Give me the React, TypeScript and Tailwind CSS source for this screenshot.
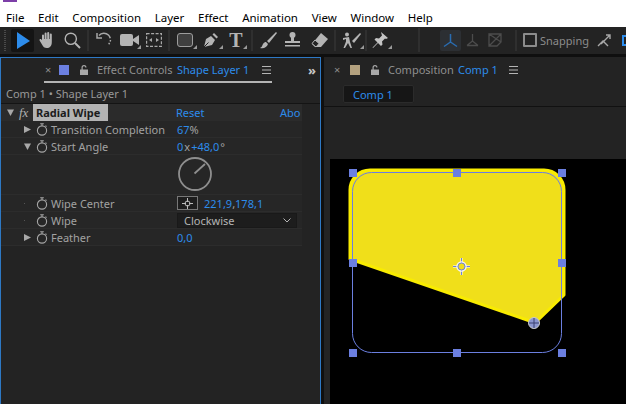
import type { ReactNode } from "react";

const menus = ["File", "Edit", "Composition", "Layer", "Effect", "Animation", "View", "Window", "Help"];

function Tool({ w, children, corner }: { w: number; children: ReactNode; corner?: boolean }) {
  return (
    <div className="relative flex h-full shrink-0 items-center justify-center" style={{ width: w }}>
      {children}
      {corner && <span className="absolute bottom-[4px] right-[1px] h-0 w-0 border-b-[4px] border-l-[4px] border-b-[#9a9a9a] border-l-transparent" />}
    </div>
  );
}

function Sep({ gap = 0 }: { gap?: number }) {
  return <div className="h-[21px] w-[2px] shrink-0 bg-[#2f2f2f]" style={{ marginLeft: gap, marginRight: gap }} />;
}

function Twirl({ open }: { open?: boolean }) {
  return open ? (
    <svg width="9" height="9" viewBox="0 0 9 9"><path d="M1 1.500h7L4.500 8z" fill="#a8a8a8" /></svg>
  ) : (
    <svg width="9" height="9" viewBox="0 0 9 9"><path d="M1 1v7l7-3.500z" fill="#a8a8a8" /></svg>
  );
}

function Watch() {
  return (
    <svg width="12" height="13" viewBox="0 0 12 13" fill="none" stroke="#a6a6a6" strokeWidth="1.1">
      <circle cx="6" cy="7.5" r="4.6" />
      <path d="M4.2.8h3.6M6 .8v2M9.5 2.600l1 1" />
    </svg>
  );
}

function Row({ twirl, label, children }: { twirl?: "open" | "closed"; label: string; children: ReactNode }) {
  return (
    <div className="flex h-[17px] items-center border-b border-[#2c2c2c]">
      <div className="flex w-[35px] shrink-0 justify-end pr-[4px]">
        {twirl ? <Twirl open={twirl === "open"} /> : <span className="mr-[7px] h-[1px] w-[1px] bg-[#555]" />}
      </div>
      <div className="flex w-[15px] shrink-0"><Watch /></div>
      <div className="w-[126px] shrink-0 text-[#a2a2a2]">{label}</div>
      <div className="flex min-w-0 flex-1 items-center text-[#2d8ceb]">{children}</div>
    </div>
  );
}

export default function App() {
  return (
    <div className="flex h-[404px] w-[626px] flex-col overflow-hidden bg-[#0f0f0f] font-['Noto_Sans',sans-serif] text-[11px] leading-none">
      {/* windows menu */}
      <div className="relative h-[27px] shrink-0 bg-white pl-[6px] pt-[12px] text-[11.5px] text-black">
        <div className="absolute left-[3px] top-0 h-[2px] w-[14px] bg-[#7d3fa8]" />
        <div className="flex gap-[13.7px]">
          {menus.map((m) => (
            <span key={m}>{m}</span>
          ))}
        </div>
      </div>

      {/* toolbar */}
      <div className="flex h-[27px] shrink-0 items-center bg-[#232323] pl-[4px] pb-[1px]">
        <div className="mr-[5px] h-[21px] w-[3px] border-x border-dotted border-[#4a4a4a]" />
        <Tool w={23}>
          <div className="flex h-[23px] w-[23px] items-center justify-center rounded-[2px] bg-[#141414]">
            <svg width="14" height="17" viewBox="0 0 14 17"><path d="M1 0v17L14 9z" fill="#2d8ceb" /></svg>
          </div>
        </Tool>
        <Tool w={26}>
          <svg width="17" height="18" viewBox="0 0 17 18" fill="#b4b4b4"><path d="M3 9V4.500a1 1 0 0 1 2 0V8h.6V2.500a1 1 0 0 1 2 0V8h.6V2a1 1 0 0 1 2 0v6h.6V3.600a1 1 0 0 1 2 0V11c0 4-2 6-5 6-2.500 0-3.500-1-4.500-3L.6 9.500c-.6-1.200 1-2 1.700-1z" /></svg>
        </Tool>
        <Tool w={24}>
          <svg width="17" height="17" viewBox="0 0 17 17" fill="none" stroke="#b4b4b4" strokeWidth="1.4"><circle cx="6.800" cy="6.800" r="5.600" /><path d="M11 11l5 5" strokeWidth="2" /></svg>
        </Tool>
        <Sep gap={3} />
        <Tool w={24}>
          <svg width="17" height="16" viewBox="0 0 17 16" fill="none" stroke="#a8a8a8" strokeWidth="1.5"><path d="M3 3.500A6.500 6.500 0 1 1 3 12" strokeDasharray="14 1.500 1.500 1.500 1.500" /><path d="M1 1v5h5" strokeWidth="1.500" /></svg>
        </Tool>
        <Tool w={26} corner>
          <svg width="19" height="12" viewBox="0 0 19 12" fill="#b4b4b4"><rect x="0" y="0" width="13" height="12" rx="2" /><path d="M13 5l6-4v10l-6-4z" /></svg>
        </Tool>
        <Tool w={24}>
          <svg width="16" height="14" viewBox="0 0 16 14" fill="none" stroke="#a8a8a8" strokeWidth="1.200"><rect x="0.600" y="0.600" width="14.800" height="12.800" strokeDasharray="3 1.500" /><path d="M3 7l3-2v4zM13 7l-3-2v4z" fill="#a8a8a8" stroke="none" /></svg>
        </Tool>
        <Sep gap={2} />
        <Tool w={26} corner>
          <div className="h-[14px] w-[16px] rounded-[3px] border border-[#9c9c9c] bg-[#3f3f3f]" />
        </Tool>
        <Tool w={26} corner>
          <svg width="16" height="16" viewBox="0 0 16 16" fill="#b4b4b4"><path d="M1 15l2-8 5-3 4 4-3 5zM9.500 2.500l1.500-1.500 4 4-1.500 1.500z" /><path d="M1 15l4.500-4.500" stroke="#232323" strokeWidth="1" /></svg>
        </Tool>
        <Tool w={24} corner>
          <span className="font-['Liberation_Serif',serif] text-[20px] font-bold text-[#b4b4b4]">T</span>
        </Tool>
        <Sep gap={3} />
        <Tool w={24}>
          <svg width="17" height="17" viewBox="0 0 17 17" fill="#b4b4b4"><path d="M16 0l1 1-8 10-2-2zM6 10l2 2c-1 3-4 5-8 4 2-1 2-2 3-4 1-1.500 2-2 3-2z" /></svg>
        </Tool>
        <Tool w={24}>
          <svg width="17" height="16" viewBox="0 0 17 16" fill="#b4b4b4"><circle cx="8.500" cy="3" r="3" /><path d="M7 5h3v4h6v2H1V9h6zM1 13h15v1.500H1z" /></svg>
        </Tool>
        <Tool w={30}>
          <svg width="17" height="15" viewBox="0 0 17 15"><path d="M10 0l7 6-7 8-6 0-3-3z" fill="#b4b4b4" /><path d="M1 10.500l4 3.500 3-3.500-4-3.500z" fill="#232323" stroke="#b4b4b4" strokeWidth="1" /></svg>
        </Tool>
        <Sep />
        <Tool w={29} corner>
          <svg width="20" height="17" viewBox="0 0 20 17" fill="#b4b4b4"><circle cx="6" cy="2.500" r="2" /><path d="M2 6l6-1 1 5 2 6H9.500L7 11l-3 5H2.500L5 9.500V7L2 8zM19 1l1 1-7 9-2-2z" /></svg>
        </Tool>
        <Sep />
        <Tool w={26} corner>
          <svg width="16" height="16" viewBox="0 0 16 16" fill="#c4c4c4"><path d="M9 0l7 6-2 1-1-.5-3 3 .5 3-1.500 1.500-3-3L1 16l-.5-.5 5-5-3-3L4 6l3 .5 3-3L9.500 2z" /></svg>
        </Tool>
        <div className="ml-[25px] h-[24px] w-[2px] shrink-0 bg-[#2f2f2f]" />
        <div className="ml-[20px] flex h-[21px] w-[21px] shrink-0 items-center justify-center rounded-[2px] bg-[#2c2f33]">
          <svg width="15" height="15" viewBox="0 0 15 15" fill="none" stroke="#2a6cb0" strokeWidth="1.500"><path d="M7.500 1v8M7.500 9L1 13.500M7.500 9l6.500 4.500" /></svg>
        </div>
        <Tool w={22}>
          <svg width="15" height="15" viewBox="0 0 15 15" fill="none" stroke="#4c4c4c" strokeWidth="1.300"><path d="M7.500 1v7M7.500 8L2 12.500M7.500 8l5.500 4.500M2 12.500h11" /></svg>
        </Tool>
        <Tool w={24}>
          <svg width="14" height="14" viewBox="0 0 14 14" fill="none" stroke="#4c4c4c" strokeWidth="1.300"><path d="M1 1h12v8L9 13H1zM1 1l12 8M13 1L1 13" /></svg>
        </Tool>
        <div className="ml-[8px] h-[21px] w-[2px] shrink-0 bg-[#2f2f2f]" />
        <div className="ml-[6px] h-[14px] w-[14px] shrink-0 rounded-[1px] border-2 border-[#8c8c8c]" />
        <span className="ml-[3px] shrink-0 text-[#8c8c8c]">Snapping</span>
        <Tool w={30}>
          <svg width="14" height="13" viewBox="0 0 14 13" fill="none" stroke="#a8a8a8" strokeWidth="1.400"><path d="M1 12l5-5 5 5M4 10l9-9M9 1h4v4" /></svg>
        </Tool>
        <div className="ml-[3px] h-[11px] w-[6px] shrink-0 border-y-2 border-l-2 border-[#2d8ceb]" />
      </div>

      <div className="flex min-h-0 flex-1 pt-[3px]">
        {/* effect controls panel */}
        <div className="flex w-[321px] shrink-0 flex-col border border-b-0 border-[#2d78c4] bg-[#232323]">
          <div className="flex h-[25px] shrink-0 items-center pl-[43px]">
            <div className="flex h-full items-center border-b-2 border-[#b4b4b4] pr-[1px]">
              <span className="ml-[1px] w-[14px] text-[11px] text-[#8c8c8c]">×</span>
              <span className="h-[10px] w-[10px] bg-[#6b7fe0]" />
              <svg className="ml-[11px] mr-[9px]" width="8" height="10" viewBox="0 0 8 10" fill="#a8a8a8"><path d="M0 4.500h8V10H0zM1.500 4.500V2.500a2.500 2.500 0 0 1 5 0H5.300a1.300 1.300 0 0 0-2.600 0v2z" /></svg>
              <span className="w-[80px] whitespace-nowrap text-[#8f8f8f]">Effect Controls</span>
              <span className="w-[85px] whitespace-nowrap text-[#2d8ceb]">Shape Layer 1</span>
              <Burger />
            </div>
            <span className="ml-auto mr-[4px] text-[13px] font-bold text-[#c8c8c8]">»</span>
          </div>
          <div className="flex h-[21px] shrink-0 items-center border-b border-[#141414] pl-[5px] text-[#999]">Comp 1 • Shape Layer 1</div>
          <div className="w-[301px] overflow-hidden bg-[#262626]">
            <div className="flex h-[17px] items-center bg-[#2b2b2b]">
              <div className="flex w-[18px] shrink-0 justify-end pr-[4px]"><Twirl open /></div>
              <span className="w-[14px] shrink-0 font-['Liberation_Serif',serif] text-[13px] italic text-[#b0b0b0]">fx</span>
              <span className="flex h-full w-[75px] shrink-0 items-center bg-[#b3b3b3] pl-[3px] font-bold text-[#1c1c1c]">Radial Wipe</span>
              <span className="ml-[68px] w-[104px] shrink-0 text-[#2d8ceb]">Reset</span>
              <span className="text-[#2d8ceb]">Abo</span>
            </div>
            <Row twirl="closed" label="Transition Completion">67<span className="text-[#a2a2a2]">%</span></Row>
            <Row twirl="open" label="Start Angle">
              <span>0</span><span className="mx-[1px] text-[#a2a2a2]">x</span><span>+48,0</span><span className="ml-[1px] text-[#a2a2a2]">°</span>
            </Row>
            <div className="flex h-[40px] items-center border-b border-[#2c2c2c] pb-[1px] pl-[176px]">
              <svg width="36" height="36" viewBox="0 0 36 36" fill="none" stroke="#8e8e8e" strokeWidth="1.800">
                <circle cx="18" cy="18" r="16" />
                <path d="M17.500 17.500L28 8" />
              </svg>
            </div>
            <Row label="Wipe Center">
              <div className="mr-[6px] flex h-[14px] w-[21px] items-center justify-center border border-[#777] bg-[#1d1d1d]">
                <svg width="11" height="11" viewBox="0 0 11 11" fill="none" stroke="#bcbcbc"><circle cx="5.500" cy="5.500" r="2.500" /><path d="M5.500 0v4M5.500 7v4M0 5.500h4M7 5.500h4" /></svg>
              </div>
              221,9<span className="text-[#a2a2a2]">,</span>178,1
            </Row>
            <Row label="Wipe">
              <div className="mr-[4px] flex h-[15px] w-[120px] items-center justify-between border border-[#191919] bg-[#1d1d1d] pl-[6px] pr-[5px] text-[#b4b4b4]">
                Clockwise
                <svg width="8" height="5" viewBox="0 0 8 5" fill="none" stroke="#b4b4b4"><path d="M.5.500L4 4 7.500.500" /></svg>
              </div>
            </Row>
            <Row twirl="closed" label="Feather">0,0</Row>
          </div>
        </div>

        {/* composition panel */}
        <div className="ml-[3px] flex min-w-0 flex-1 flex-col bg-[#232323]">
          <div className="flex h-[25px] shrink-0 items-center pl-[10px]">
            <span className="w-[16px] text-[#8c8c8c]">×</span>
            <span className="h-[10px] w-[10px] bg-[#b3a17f]" />
            <svg className="ml-[11px] mr-[9px]" width="8" height="10" viewBox="0 0 8 10" fill="#a8a8a8"><path d="M0 4.500h8V10H0zM1.500 4.500V2.500a2.500 2.500 0 0 1 5 0H5.300a1.300 1.300 0 0 0-2.600 0v2z" /></svg>
            <span className="w-[70px] whitespace-nowrap text-[#8f8f8f]">Composition</span>
            <span className="w-[51px] whitespace-nowrap text-[#2d8ceb]">Comp 1</span>
            <Burger />
          </div>
          <div className="flex h-[25px] shrink-0 items-center border-b border-[#111] pl-[19px]">
            <div className="flex h-[18px] w-[71px] items-center rounded-[2px] border border-[#2b2b2b] bg-[#161616] pl-[9px] text-[#2d8ceb]">Comp 1</div>
          </div>
          <div className="h-[52px] shrink-0" />
          <div className="ml-[6px] min-h-0 flex-1 bg-black">
            <Viewer />
          </div>
        </div>
      </div>
    </div>
  );
}

function Burger() {
  return (
    <svg width="9" height="8" viewBox="0 0 9 8" stroke="#b4b4b4"><path d="M0 .5h9M0 4h9M0 7.500h9" /></svg>
  );
}

function Viewer() {
  const handles = [
    [353, 173], [457, 173], [562, 173],
    [353, 263], [562, 263],
    [353, 353], [457, 353], [562, 353],
  ];
  return (
    <svg className="block" width="296" height="245" viewBox="330 159 296 245">
      <path
        d="M350 259V190A20 20 0 0 1 370 170H544A20 20 0 0 1 564 190V295L536 322L530 321Z"
        fill="#f0df1a"
        stroke="#f9ec00"
        strokeWidth="3"
        strokeLinejoin="round"
      />
      <rect x="352.500" y="172.500" width="209" height="180" rx="19" fill="none" stroke="#6b7fe0" strokeWidth="1" />
      {handles.map(([x, y]) => (
        <rect key={`${x}-${y}`} x={x - 4} y={y - 4} width="8" height="8" fill="#6b7fe0" />
      ))}
      <g fill="none">
        <path d="M461.500 258v5M461.500 270v5M453 266.500h5M465 266.500h5" stroke="#ffffff" strokeWidth="2" />
        <path d="M461.500 258v5M461.500 270v5M453 266.500h5M465 266.500h5" stroke="#6b7fe0" strokeWidth="1" />
        <circle cx="461.500" cy="266.500" r="4.500" stroke="#f4f4f4" strokeWidth="1.500" />
        <circle cx="461.500" cy="266.500" r="3.500" stroke="#6b7fe0" strokeWidth="1" />
      </g>
      <circle cx="534" cy="323" r="5.500" fill="#8c97cf" stroke="#c9c9c9" strokeWidth="1" />
      <path d="M534 318v10M529 323h10" stroke="#3a4170" strokeWidth="1" />
    </svg>
  );
}
